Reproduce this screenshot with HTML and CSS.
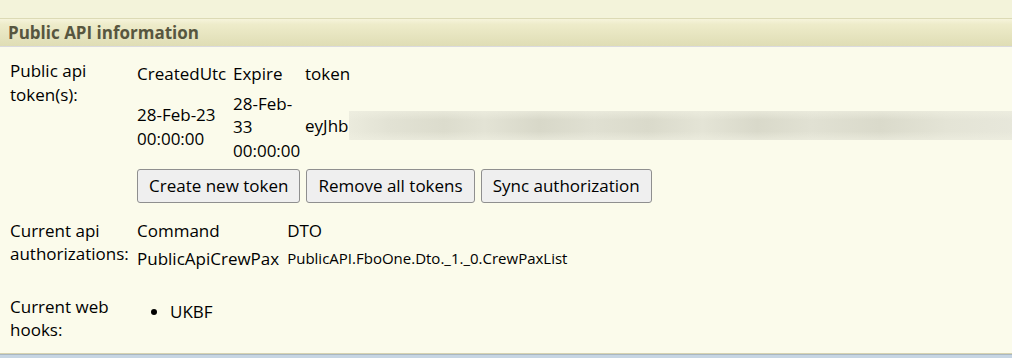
FILE: index.html
```html
<!DOCTYPE html>
<html lang="en">
<head>
  <meta charset="UTF-8" />
  <title>Public API information</title>
  <link rel="stylesheet" href="styles.css">
</head>
<body>
  <!-- fin de la section précédente -->
  <div class="prev-section"></div>

  <div class="panel">
    <div class="panel-header">Public API information</div>

    <div class="panel-body">
      <table class="info-table">
        <colgroup>
          <col class="label-col">
          <col>
        </colgroup>
        <tr class="row-tokens">
          <td class="label">Public api token(s):</td>
          <td class="value">
            <table class="token-table">
              <colgroup>
                <col class="created-col">
                <col class="expire-col">
                <col>
              </colgroup>
              <tr>
                <td>CreatedUtc</td>
                <td>Expire</td>
                <td>token</td>
              </tr>
              <tr class="token-row">
                <td>28-Feb-23 00:00:00</td>
                <td>28-Feb-33 00:00:00</td>
                <td class="token">eyJhb<span class="redacted"></span></td>
              </tr>
            </table>
            <div class="actions">
              <button>Create new token</button>
              <button>Remove all tokens</button>
              <button>Sync authorization</button>
            </div>
          </td>
        </tr>
        <tr class="row-auth">
          <td class="label">Current api authorizations:</td>
          <td class="value">
            <table class="auth-table">
              <tr>
                <td>Command</td>
                <td>DTO</td>
              </tr>
              <tr class="auth-row">
                <td>PublicApiCrewPax</td>
                <td class="dto">PublicAPI.FboOne.Dto._1._0.CrewPaxList</td>
              </tr>
            </table>
          </td>
        </tr>
        <tr class="row-hooks">
          <td class="label">Current web hooks:</td>
          <td class="value">
            <ul class="hooks">
              <li>UKBF</li>
            </ul>
          </td>
        </tr>
      </table>
    </div>
  </div>

  <div class="page-bottom"></div>
</body>
</html>
```

FILE: styles.css
```css
* {
  margin: 0;
  padding: 0;
  box-sizing: border-box;
}

body {
  font-family: 'Segoe UI', 'Open Sans', sans-serif;
  font-size: 17px;
  line-height: 23.5px;
  color: #000;
  background-color: #fbfbeb;
  overflow: hidden;
}

.prev-section {
  height: 19px;
  background-color: #f3f3da;
  border-bottom: 1px solid #dcdab5;
}

.panel {
  border-bottom: 1px solid #d6d2b0;
}

.panel-header {
  height: 28px;
  padding-left: 8px;
  line-height: 27px;
  font-weight: bold;
  color: #57563f;
  background: linear-gradient(#f6f4db, #eeecca 20%, #dfddb5);
  border-bottom: 1px solid #dadade;
}

.panel-body {
  background-color: #fbfbeb;
  padding-bottom: 11px;
}

.info-table {
  width: 100%;
  border-collapse: collapse;
  table-layout: fixed;
}

.label-col {
  width: 137px;
}

.info-table > tbody > tr > td {
  vertical-align: top;
}

.label {
  padding-left: 10px;
  padding-right: 6px;
}

.row-tokens > td {
  padding-top: 12px;
  padding-bottom: 4px;
}

.row-auth > td {
  padding-top: 12px;
  padding-bottom: 12px;
}

.row-hooks > td {
  padding-top: 12px;
}

/* tableau des tokens */
.token-table {
  margin-left: -3px;
  border-collapse: collapse;
  table-layout: fixed;
  width: 900px;
}

.created-col {
  width: 96px;
}

.expire-col {
  width: 72px;
}

.token-table td {
  padding: 3px;
  vertical-align: middle;
}

.token {
  white-space: nowrap;
}

.redacted {
  display: inline-block;
  vertical-align: middle;
  width: 680px;
  height: 29px;
  margin-top: -3px;
  margin-left: 1px;
  background:
    linear-gradient(rgba(240, 240, 226, 0.6), rgba(240, 240, 226, 0) 30%, rgba(240, 240, 226, 0) 70%, rgba(240, 240, 226, 0.6)),
    linear-gradient(90deg, #ebebdd 0%, #e2e2d4 6%, #dcdccd 14%, #e3e3d5 20%, #d8d8c9 28%, #e0e0d2 36%, #dadacb 44%, #e4e4d6 52%, #d9d9ca 60%, #e1e1d3 68%, #dadacb 78%, #e4e4d6 88%, #e8e8dc 100%);
}

.actions {
  display: flex;
  gap: 6px;
  margin-top: 4px;
}

.actions button {
  font-family: inherit;
  font-size: 17px;
  line-height: 23.5px;
  color: #000;
  background-color: #efefef;
  border: 1px solid #8f8f8f;
  border-radius: 3px;
  padding: 4px 11px;
}

/* autorisations */
.auth-table {
  border-collapse: collapse;
}

.auth-table td {
  padding: 0 8px 0 0;
  vertical-align: bottom;
}

.auth-row td {
  padding-top: 5px;
}

.dto {
  font-size: 15px;
}

/* web hooks */
.hooks {
  margin-top: 5px;
  padding-left: 33px;
}

.page-bottom {
  height: 4px;
  background-color: #c6d5e3;
  border-top: 1px solid #a9b7c2;
}
```
